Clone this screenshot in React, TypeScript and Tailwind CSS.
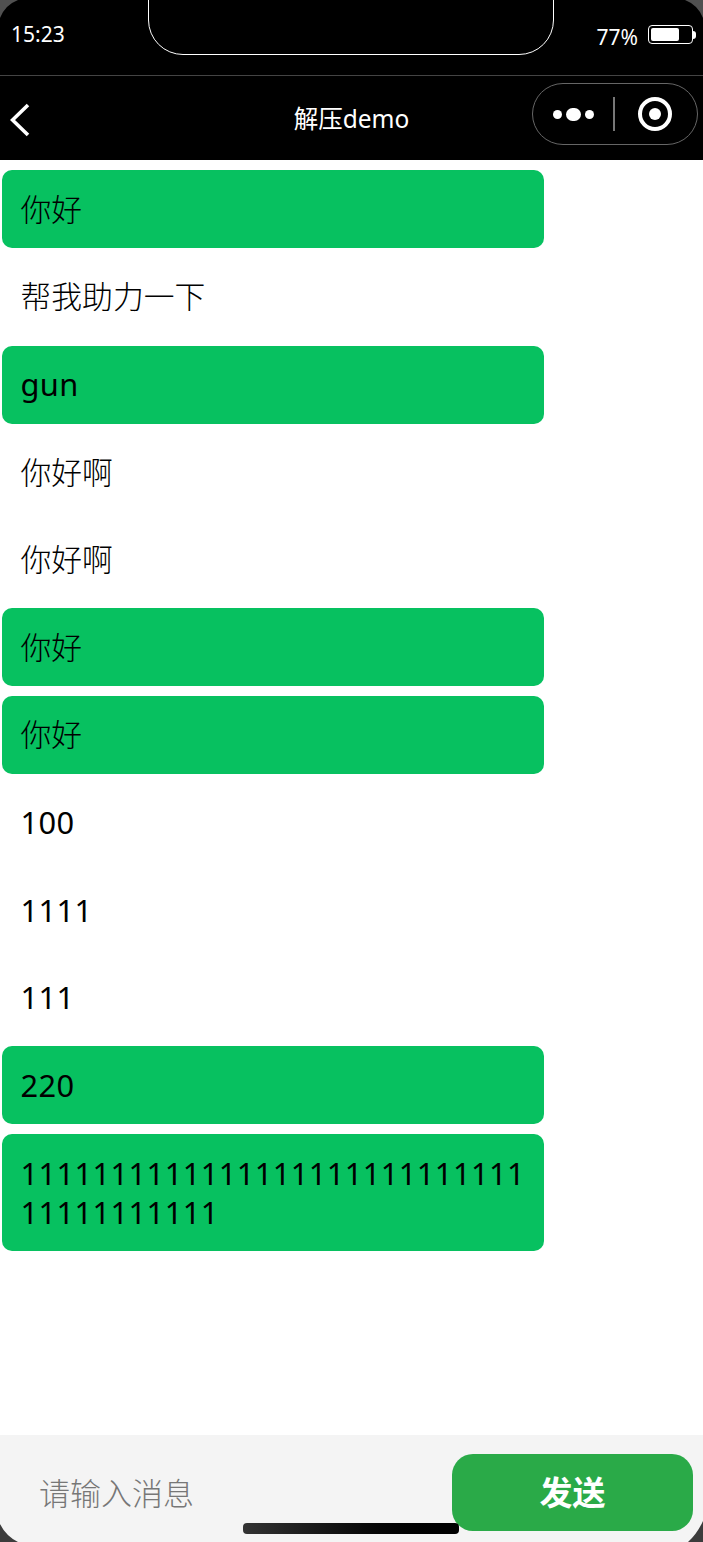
import clsx from "clsx";

const messages = [
  { text: "你好", mine: true, cjk: true },
  { text: "帮我助力一下", mine: false, cjk: true },
  { text: "gun", mine: true, cjk: false },
  { text: "你好啊", mine: false, cjk: true },
  { text: "你好啊", mine: false, cjk: true },
  { text: "你好", mine: true, cjk: true },
  { text: "你好", mine: true, cjk: true },
  { text: "100", mine: false, cjk: false },
  { text: "1111", mine: false, cjk: false },
  { text: "111", mine: false, cjk: false },
  { text: "220", mine: true, cjk: false },
  { text: "111111111111111111111111111111111111111", mine: true, cjk: false },
];

function Corners() {
  return (
    <svg className="absolute inset-0 pointer-events-none" width="703" height="1542" viewBox="0 0 703 1542">
      <path d="M0 0H18Q5 5 0 18Z" fill="#505050" />
      <path d="M703 0H685Q698 5 703 18Z" fill="#505050" />
      <path d="M0 1542H18Q6 1536 0 1524Z" fill="#3c3c3c" />
      <path d="M703 1542H688Q697 1534 703 1521V1542Z" fill="#3c3c3c" />
    </svg>
  );
}

export default function App() {
  return (
    <div className="relative flex h-[1542px] w-[703px] flex-col overflow-hidden bg-white font-['Noto_Sans','Noto_Sans_CJK_SC',sans-serif]">
      <div className="flex h-[76px] items-start justify-between border-b border-[#444] bg-black pl-[11px] pr-[7px] text-white">
        <span className="mt-[18px] text-[21px] leading-[32px]">15:23</span>
        <div className="mt-[21px] flex items-start gap-[10px]">
          <span className="text-[21px] leading-[32px]">77%</span>
          <div className="mt-[4px] flex items-center">
            <div className="h-[19px] w-[45px] rounded-[4px] border border-white p-[2px]">
              <div className="h-full w-[28px] rounded-[2px] bg-white" />
            </div>
            <div className="h-[8px] w-[3px] rounded-r-full bg-white" />
          </div>
        </div>
      </div>

      <div className="absolute left-[148px] top-[-1px] h-[56px] w-[406px] rounded-b-[35px] border border-white bg-black" />

      <div className="relative flex h-[84px] shrink-0 items-center justify-center bg-black text-white">
        <svg className="absolute left-[10px] top-[27px]" width="20" height="34" viewBox="0 0 20 34" fill="none">
          <path d="M18 2L2.5 17L18 32" stroke="white" strokeWidth="3.6" />
        </svg>
        <span className="mt-[2px] text-[24.5px] leading-[36px]">解压demo</span>
        <div className="absolute left-[531.5px] top-[7px] flex h-[62px] w-[166px] items-center rounded-full border border-[#666]">
          <div className="ml-[20px] flex items-center gap-[4px]">
            <div className="h-[9px] w-[9px] rounded-full bg-white" />
            <div className="h-[13px] w-[15px] rounded-full bg-white" />
            <div className="h-[9px] w-[9px] rounded-full bg-white" />
          </div>
          <div className="ml-[19px] h-[34px] w-[2.5px] bg-[#777]" />
          <div className="ml-[23px] flex h-[34px] w-[34px] items-center justify-center rounded-full border-[4px] border-white">
            <div className="h-[12px] w-[12px] rounded-full bg-white" />
          </div>
        </div>
      </div>

      <div className="flex flex-1 flex-col gap-[9.62px] pl-[1.5px] pt-[10.3px]">
        {messages.map((m, i) => (
          <div
            key={i}
            className={clsx(
              "w-[542.5px] break-all px-[19px] py-[19.5px] text-[30.8px] leading-[39px] text-black",
              m.mine && "rounded-[10px] bg-[#07c160]",
              m.cjk ? "font-light" : "tracking-[0.4px]"
            )}
          >
            {m.text}
          </div>
        ))}
      </div>

      <div className="flex h-[107px] shrink-0 items-start justify-between bg-[#f4f4f4] pl-[39px] pr-[10px] pt-[19px]">
        <span className="text-[31px] font-light leading-[78px] text-[#777]">请输入消息</span>
        <button className="h-[77px] w-[241px] rounded-[21px] bg-[#2aaa48] text-[33px] font-bold text-white">发送</button>
      </div>

      <div className="absolute left-[243px] top-[1523px] h-[11px] w-[216px] rounded-[4px] bg-gradient-to-r from-[#333] to-black" />
      <Corners />
    </div>
  );
}
